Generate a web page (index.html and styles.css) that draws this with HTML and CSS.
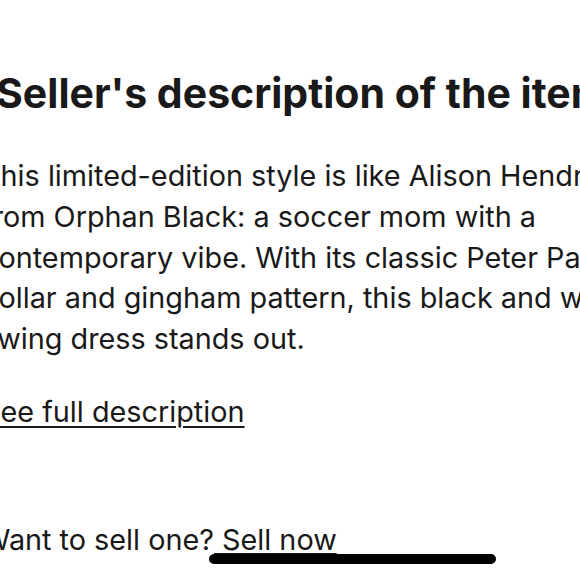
FILE: index.html
```html
<!DOCTYPE html>
<html>
<head>
<meta charset="utf-8">
<link rel="stylesheet" href="styles.css">
</head>
<body>
<main class="page">
  <section class="desc">
    <h2 class="desc-title">Seller's description of the item</h2>
    <p class="desc-text">This limited-edition style is like Alison Hendrix from Orphan Black: a soccer mom with a contemporary vibe. With its classic Peter Pan collar and gingham pattern, this black and white swing dress stands out.</p>
    <a class="desc-more" href="#">See full description</a>
  </section>
  <p class="sell">Want to sell one?<a class="sell-link" href="#"> Sell now</a></p>
</main>
<div class="home-indicator"></div>
</body>
</html>
```
FILE: styles.css
```css
html, body {
  margin: 0;
  padding: 0;
  background: #fff;
  overflow: hidden;
}
body {
  width: 580px;
  height: 580px;
  font-family: Inter, "Noto Sans", sans-serif;
  color: #191919;
}
.page {
  margin-left: -18px;
  width: 665px;
  padding-top: 68px;
}
.desc-title {
  margin: 0;
  padding-left: 14px;
  font-size: 41px;
  font-weight: 700;
  line-height: 50px;
  white-space: nowrap;
}
.desc-text {
  margin: 38px 0 0;
  font-size: 28.8px;
  line-height: 40.75px;
}
.desc-more {
  display: inline-block;
  margin-top: 34.5px;
  font-size: 28.8px;
  line-height: 36px;
  color: #191919;
  text-decoration: underline;
  text-underline-offset: 4px;
  text-decoration-thickness: 2px;
}
.sell {
  margin: 92px 0 0;
  font-size: 28.8px;
  line-height: 36px;
  white-space: nowrap;
}
.sell-link {
  color: #191919;
  text-decoration: underline;
  text-underline-offset: 3px;
  text-decoration-thickness: 2px;
}
.home-indicator {
  position: absolute;
  left: 209px;
  top: 554px;
  width: 287px;
  height: 10px;
  border-radius: 5px;
  background: #000;
}
```
